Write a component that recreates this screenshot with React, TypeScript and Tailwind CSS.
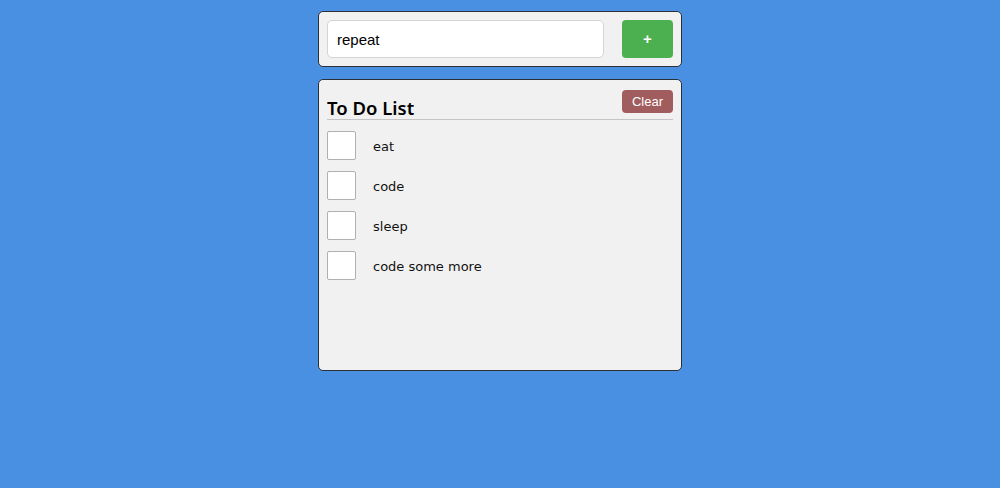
import { useState } from 'react'

const initialItems = ['eat', 'code', 'sleep', 'code some more']

export default function App() {
  const [text, setText] = useState('repeat')
  const [items, setItems] = useState(initialItems)

  const addItem = () => {
    if (!text.trim()) return
    setItems([...items, text.trim()])
    setText('')
  }

  return (
    <div className="min-h-screen bg-[#4a90e2] flex flex-col items-center pt-[11px] gap-[12px]">
      <div className="w-[364px] h-[56px] bg-[#f1f1f1] border border-[#2b2f36] rounded-[5px] flex items-center px-[8px] gap-[18px]">
        <input
          value={text}
          onChange={(e) => setText(e.target.value)}
          className="w-[277px] h-[38px] bg-white border border-[#d4d4d4] rounded-[5px] px-[9px] text-[15px] text-black outline-none font-['Liberation_Sans',Arial,sans-serif]"
        />
        <button
          onClick={addItem}
          className="w-[51px] h-[38px] bg-[#4caf50] text-white rounded-[4px] text-[15px] font-bold font-['Liberation_Sans',Arial,sans-serif] flex items-center justify-center"
        >
          +
        </button>
      </div>

      <div className="w-[364px] h-[292px] bg-[#f1f1f1] border border-[#2b2f36] rounded-[5px] px-[8px] pt-[10px]">
        <div className="h-[30px] flex justify-between items-start border-b border-[#c4c4c4]">
          <h2 className="self-end text-[18.5px] leading-[22px] font-semibold text-black font-['Noto_Sans',sans-serif]">
            To Do List
          </h2>
          <button
            onClick={() => setItems([])}
            className="w-[51px] h-[23px] bg-[#a15d5d] text-white rounded-[4px] text-[13px] font-['Liberation_Sans',Arial,sans-serif] flex items-center justify-center"
          >
            Clear
          </button>
        </div>
        <ul className="mt-[11px] flex flex-col gap-[11px]">
          {items.map((item, i) => (
            <li key={i} className="flex items-center gap-[17px] h-[29px]">
              <div className="w-[29px] h-[29px] bg-white border border-[#b0b0b0] rounded-[2px]" />
              <span className="text-[13px] leading-[15px] pt-[2px] text-[#111] font-['DejaVu_Sans',sans-serif]">{item}</span>
            </li>
          ))}
        </ul>
      </div>
    </div>
  )
}
